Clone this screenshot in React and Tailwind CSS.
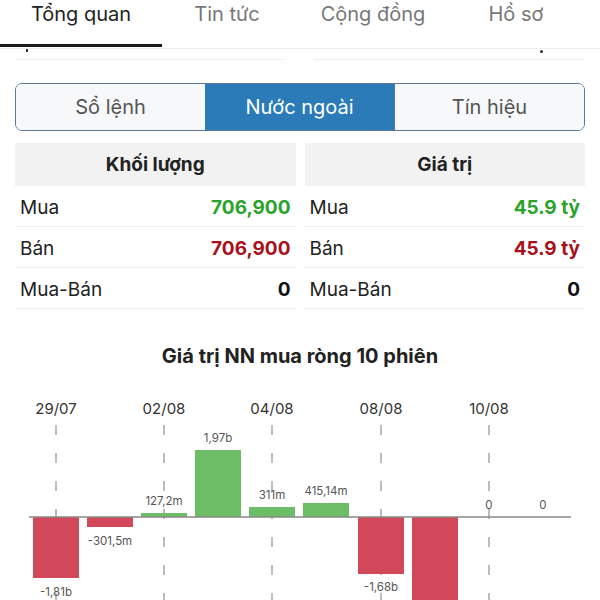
import React from "react";

const bars = [
  { x: 56, v: -61, label: "-1,81b" },
  { x: 110, v: -10, label: "-301,5m" },
  { x: 164, v: 4, label: "127,2m" },
  { x: 218, v: 67, label: "1,97b" },
  { x: 272, v: 10, label: "311m" },
  { x: 326, v: 14, label: "415,14m" },
  { x: 381, v: -57, label: "-1,68b" },
  { x: 435, v: -110, label: "" },
  { x: 489, v: 0, label: "0" },
  { x: 543, v: 0, label: "0" },
];
const dates = [
  { x: 56, t: "29/07" },
  { x: 164, t: "02/08" },
  { x: 272, t: "04/08" },
  { x: 381, t: "08/08" },
  { x: 489, t: "10/08" },
];

function Chart() {
  const axis = 137;
  return (
    <svg width="600" height="220" viewBox="0 0 600 220" className="block">
      {dates.map((d) => (
        <g key={d.t}>
          <text x={d.x} y={34} textAnchor="middle" fontSize="15" fill="#333" fontFamily="Inter, sans-serif">
            {d.t}
          </text>
          <line x1={d.x} y1={45} x2={d.x} y2={220} stroke="#999" strokeWidth="1.3" strokeDasharray="10 18" />
        </g>
      ))}
      {bars.map((b, i) => {
        if (b.v === 0) return null;
        const top = b.v > 0 ? axis - b.v : axis;
        const h = Math.abs(b.v);
        return (
          <rect key={i} x={b.x - 23} y={top} width={46} height={h} fill={b.v > 0 ? "#6cbd66" : "#d2485a"} />
        );
      })}
      <line x1={29} y1={axis} x2={571} y2={axis} stroke="#888" strokeWidth="1.6" />
      {bars.map((b, i) => {
        if (!b.label) return null;
        let y;
        if (b.v > 0) y = axis - b.v - 8;
        else if (b.v < 0) y = axis - b.v + 16;
        else y = axis - 8;
        if (b.label === "-1,81b") y = 216;
        if (b.label === "-1,68b") y = 211;
        if (b.label === "-301,5m") y = 165;
        return (
          <text key={i} x={b.x} y={y} textAnchor="middle" fontSize="11.5" fill="#555" fontFamily="Inter, sans-serif">
            {b.label}
          </text>
        );
      })}
    </svg>
  );
}

function Row({ label, value, color }) {
  return (
    <div className="flex h-[41px] items-center justify-between border-b border-[#eeeeee] px-[5px] pt-[4px]">
      <span className="text-[19px] text-[#222]">{label}</span>
      <span className={`text-[19px] font-bold ${color}`}>{value}</span>
    </div>
  );
}

function Table({ title, rows }) {
  return (
    <div className="flex-1">
      <div className="flex h-[43px] items-center justify-center bg-[#f2f2f2] pt-[1px] text-[19px] font-bold text-[#222]">
        {title}
      </div>
      {rows.map((r) => (
        <Row key={r.label} {...r} />
      ))}
    </div>
  );
}

export default function App() {
  return (
    <div className="relative h-[600px] w-[600px] overflow-hidden bg-white" style={{ fontFamily: "Inter, 'Noto Sans', sans-serif" }}>
      {/* Tab bar */}
      <div className="relative flex h-[49px] items-start border-b border-[#ececec] text-[20px] leading-[28px]">
        <div className="w-[162px] text-center text-[#222]">Tổng quan</div>
        <div className="w-[130px] text-center text-[#777]">Tin tức</div>
        <div className="w-[162px] text-center text-[#777]">Cộng đồng</div>
        <div className="w-[124px] text-center text-[#777]">Hồ sơ</div>
        <div className="absolute bottom-[1px] left-0 h-[3px] w-[162px] bg-[#1a1a1a]" />
      </div>
      {/* Cut-off row */}
      <div className="relative flex h-[11px] gap-[29px] px-[15px]">
        <div className="w-[270px] border-b border-[#eeeeee]" />
        <div className="w-[271px] border-b border-[#eeeeee]" />
        <div className="absolute left-[26px] top-0 h-[3px] w-[2px] bg-[#333]" />
        <div className="absolute left-[540px] top-[1px] h-[3px] w-[3px] rounded-full bg-[#333]" />
      </div>
      {/* Segmented control */}
      <div className="mx-[15px] mt-[23px] flex h-[48px] overflow-hidden rounded-[7px] border-[1.5px] border-[#5b7896] text-[20px]">
        <div className="flex flex-1 items-center justify-center bg-[#f6f8fa] text-[#555]">Sổ lệnh</div>
        <div className="flex flex-1 items-center justify-center bg-[#2a7bb8] text-white">Nước ngoài</div>
        <div className="flex flex-1 items-center justify-center border-l-[1.5px] border-[#5b7896] bg-[#f6f8fa] text-[#555]">Tín hiệu</div>
      </div>
      {/* Tables */}
      <div className="mt-[12px] flex gap-[9px] px-[15px]">
        <Table
          title="Khối lượng"
          rows={[
            { label: "Mua", value: "706,900", color: "text-[#2aa32a]" },
            { label: "Bán", value: "706,900", color: "text-[#a8101c]" },
            { label: "Mua-Bán", value: "0", color: "text-[#111]" },
          ]}
        />
        <Table
          title="Giá trị"
          rows={[
            { label: "Mua", value: "45.9 tỷ", color: "text-[#2aa32a]" },
            { label: "Bán", value: "45.9 tỷ", color: "text-[#a8101c]" },
            { label: "Mua-Bán", value: "0", color: "text-[#111]" },
          ]}
        />
      </div>
      {/* Chart title */}
      <div className="mt-[33px] text-center text-[20px] font-bold leading-[28px] text-[#222]">
        Giá trị NN mua ròng 10 phiên
      </div>
      <div className="mt-[10px]">
        <Chart />
      </div>
    </div>
  );
}
